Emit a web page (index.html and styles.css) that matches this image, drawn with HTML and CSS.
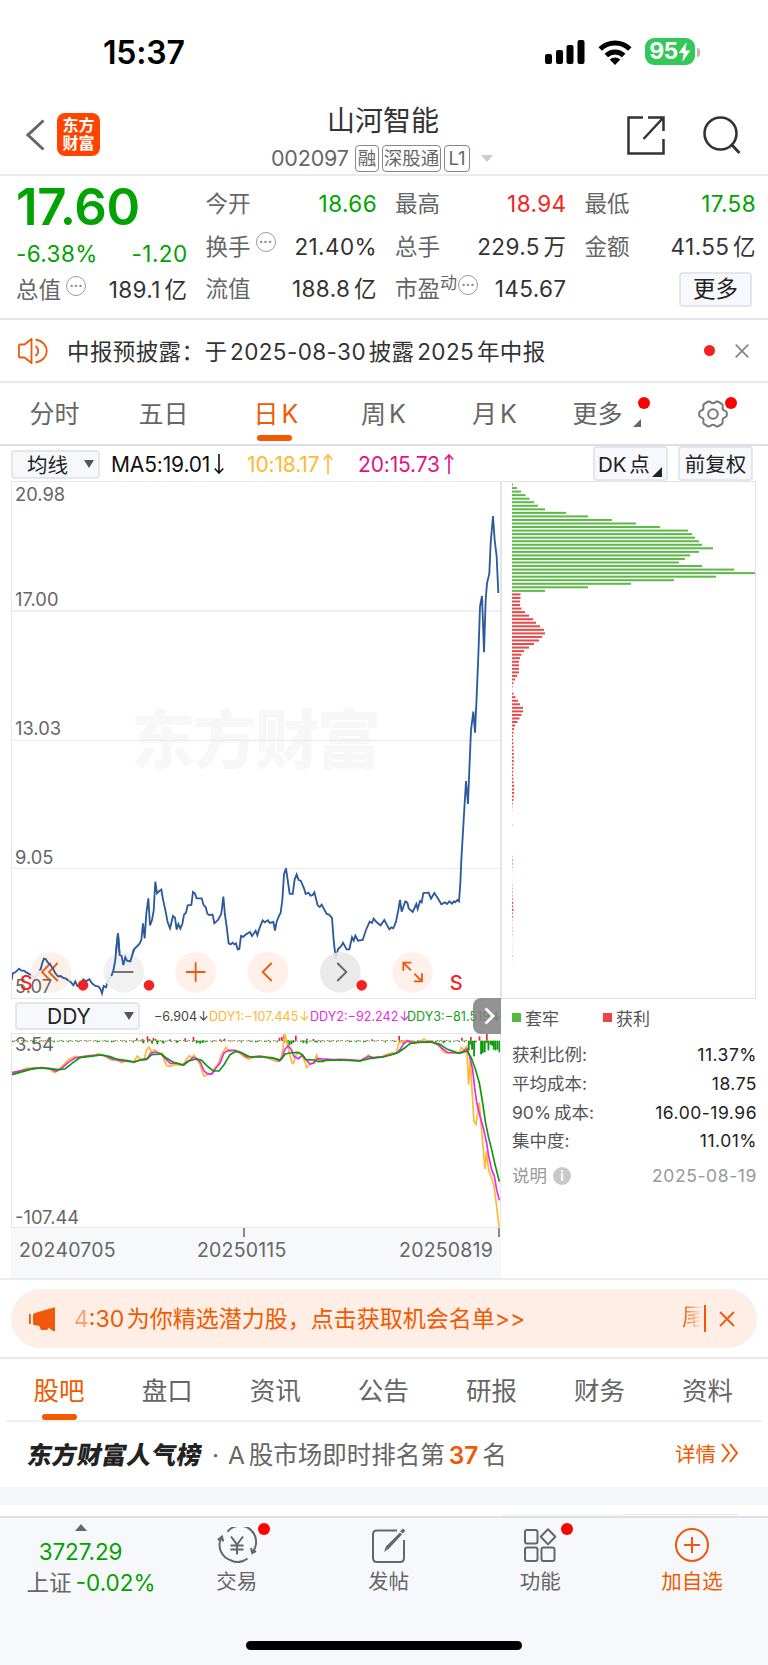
FILE: index.html
```html
<!DOCTYPE html>
<html lang="zh-CN">
<head>
    <meta charset="UTF-8">
    <meta name="viewport" content="width=device-width, initial-scale=1.0">
    <title>山河智能 002097</title>
    <link rel="stylesheet" href="styles.css">
</head>
<body>
    <!-- 状态栏 -->
    <div class="status">
        <span class="time">15:37</span>
        <div class="status-icons">
            <svg width="40" height="24" viewBox="0 0 40 24"><rect x="0" y="14" width="7" height="10" rx="2"/><rect x="11" y="10" width="7" height="14" rx="2"/><rect x="21.500" y="5" width="7" height="19" rx="2"/><rect x="32.500" y="0" width="7" height="24" rx="2"/></svg>
            <svg class="wifi" width="34" height="25" viewBox="0 0 34 25"><path d="M17 25l-5.300-5.500a7.700 7.700 0 0 1 10.600 0z"/><path d="M8.300 15.500a12.500 12.500 0 0 1 17.400 0M2.200 9a21.500 21.500 0 0 1 29.600 0" fill="none" stroke="#000" stroke-width="5"/></svg>
            <div class="battery"><b>95</b><svg width="13" height="20" viewBox="0 0 11 19"><path d="M7.500 0L0 10.500h4.600L3.500 19 11 8H6.400z" fill="#fff"/></svg></div>
            <i class="battery-tip"></i>
        </div>
    </div>

    <!-- 标题 -->
    <header class="nav">
        <svg class="back" width="19" height="32" viewBox="0 0 19 32"><path d="M17.500 1.500L2 16l15.500 14.500" fill="none" stroke="#666" stroke-width="3"/></svg>
        <div class="logo">东方<br>财富</div>
        <div class="title">
            <h1>山河智能</h1>
            <div class="code"><span class="num">002097</span><em>融</em><em class="w3">深股通</em><em class="l1">L1</em><i class="tri"></i></div>
        </div>
        <svg class="share" width="38" height="39" viewBox="0 0 38 39"><path d="M16 1.500H1.500v36h35V23M21 1.500h15.500V15M36 2L16.500 23" fill="none" stroke="#333" stroke-width="2.500"/></svg>
        <svg class="search" width="38" height="38" viewBox="0 0 38 38"><circle cx="17.500" cy="17.500" r="16" fill="none" stroke="#333" stroke-width="2.600"/><path d="M28 28l8.500 9" stroke="#333" stroke-width="2.800"/></svg>
    </header>

    <!-- 报价 -->
    <section class="quote">
        <div class="col first">
            <div class="price">17.60</div>
            <div class="row green"><span>-6.38%</span><span>-1.20</span></div>
            <div class="row last"><label>总值<i class="dots">···</i></label><span>189.1 亿</span></div>
        </div>
        <div class="col">
            <div class="row"><label>今开</label><span class="green">18.66</span></div>
            <div class="row"><label>换手<i class="dots">···</i></label><span>21.40%</span></div>
            <div class="row"><label>流值</label><span>188.8 亿</span></div>
        </div>
        <div class="col">
            <div class="row"><label>最高</label><span class="red">18.94</span></div>
            <div class="row"><label>总手</label><span>229.5 万</span></div>
            <div class="row"><label>市盈<sup>动</sup><i class="dots near">···</i></label><span>145.67</span></div>
        </div>
        <div class="col">
            <div class="row"><label>最低</label><span class="green">17.58</span></div>
            <div class="row"><label>金额</label><span>41.55 亿</span></div>
            <div class="row end"><button class="more">更多</button></div>
        </div>
    </section>

    <section class="notice">
        <svg width="30" height="26" viewBox="0 0 30 26" fill="none" stroke="#f0590c" stroke-width="1.800"><path d="M1 7.500q0-1 1-1h4.500L13.500 1v24L6.500 19.500H2q-1 0-1-1zM17.500 8a6 6 0 0 1 0 10M17.500 1.500c15 2.500 15 20.500 0 23"/></svg>
        <p>中报预披露：于 2025-08-30 披露 2025 年中报</p>
        <i class="dot"></i>
        <svg width="14" height="14" viewBox="0 0 14 14"><path d="M.7.700l12.600 12.600M13.300.7L.7 13.300" stroke="#888" stroke-width="1.800"/></svg>
    </section>

    <nav class="periods">
        <a>分时</a><a>五日</a><a class="on">日 K</a><a>周 K</a><a>月 K</a>
        <a class="has-more">更多<i class="corner"></i><i class="dot"></i></a>
        <a class="gear"><svg width="30" height="28" viewBox="0 0 30 28" fill="none" stroke="#777" stroke-width="2"><path d="M9 2.200c1-1 3-.8 3.700.1 1.300 1.400 3.300 1.400 4.600 0 .7-.9 2.700-1.100 3.700-.1l3 1.900c1 .8.800 2 .6 3-.3 1.800.5 3 2.200 3.500 1.200.4 2 1 2 2.200v2.400c0 1.200-.8 1.800-2 2.200-1.700.5-2.500 1.700-2.200 3.500.2 1 .4 2.200-.6 3l-3 1.900c-1 1-3 .8-3.700-.1-1.300-1.400-3.300-1.400-4.600 0-.7.900-2.700 1.100-3.700.1l-3-1.900c-1-.8-.8-2-.6-3 .3-1.800-.5-3-2.200-3.500-1.200-.4-2-1-2-2.200v-2.400c0-1.200.8-1.800 2-2.200 1.700-.5 2.500-1.700 2.200-3.500-.2-1-.4-2.200.6-3z"/><circle cx="15" cy="14" r="4.800"/></svg><i class="dot"></i></a>
    </nav>

    <!-- 均线 -->
    <div class="ma">
        <button class="sel">均线<i></i></button>
        <span class="ma5">MA5:19.01<svg width="10" height="20" viewBox="0 0 10 20"><path d="M5 0v19M.7 14.500L5 19l4.300-4.500"/></svg></span>
        <span class="ma10">10:18.17<svg width="10" height="20" viewBox="0 0 10 20"><path d="M5 20V1M.7 5.500L5 1l4.300 4.500"/></svg></span>
        <span class="ma20">20:15.73<svg width="10" height="20" viewBox="0 0 10 20"><path d="M5 20V1M.7 5.500L5 1l4.300 4.500"/></svg></span>
        <button class="dk">DK 点<i></i></button>
        <button class="fq">前复权</button>
    </div>

    <section class="charts">
        <div class="left">
            <div class="kline">
                <svg width="490" height="517" viewBox="33 -777 1470 1551">
                    <text class="watermark" x="394" y="70" textLength="750">东方财富</text>
                    <path class="grid" d="M33-387H1503M33 1H1503M33 385H1503"/>
                    <g class="axis"><text x="45" y="-716">20.98</text><text x="45" y="-402">17.00</text><text x="45" y="-16">13.03</text><text x="45" y="372">9.05</text></g>
                    <polyline class="price-line" points="35,720 38,700 46,697 57,686 64,692 72,692 80,698 90,703 98,708 105,718 112,706 118,690 122,688 127,668 132,656 137,657 144,668 152,676 160,688 166,700 174,709 182,708 190,714 198,716 206,722 212,726 220,736 226,724 232,738 242,732 250,718 258,724 268,718 276,730 286,738 296,740 302,748 306,760 311,738 318,742 326,716 334,708 340,692 346,660 349,625 354,580 359,645 365,648 370,675 376,652 381,662 391,664 402,628 412,618 418,612 424,600 429,550 434,595 439,520 445,475 450,556 456,540 461,512 466,425 471,460 478,453 484,449 489,478 497,515 503,547 510,565 519,528 525,533 530,569 535,552 541,566 547,552 552,524 558,518 563,496 574,495 579,456 585,461 590,475 605,475 611,496 617,501 622,521 628,525 638,524 643,550 654,540 664,521 670,470 675,525 680,560 686,610 692,613 698,608 703,613 708,610 713,628 718,627 723,588 730,590 738,583 750,576 756,588 767,572 772,586 778,566 788,541 794,547 804,541 809,549 820,546 825,572 830,545 836,530 842,518 847,480 852,403 858,385 863,420 869,461 878,462 884,418 890,403 896,420 902,422 912,445 917,462 925,458 932,467 938,465 943,457 953,496 959,501 965,494 980,522 987,524 996,534 1001,600 1007,655 1014,628 1024,618 1029,608 1040,628 1048,628 1056,592 1061,602 1066,587 1074,602 1088,600 1098,570 1109,545 1116,549 1121,536 1130,547 1142,556 1153,540 1160,553 1168,568 1174,562 1180,565 1188,545 1195,510 1200,480 1205,515 1216,484 1222,488 1226,505 1238,516 1249,492 1253,507 1260,483 1265,487 1270,459 1286,458 1293,476 1303,459 1313,474 1324,493 1335,487 1341,492 1348,484 1356,491 1362,484 1366,487 1372,480 1377,484 1381,430 1384,360 1391,240 1398,123 1404,192 1408,90 1413,-30 1420,-85 1425,-22 1430,-130 1436,-280 1440,-400 1446,-432 1452,-263 1457,-420 1461,-470 1468,-500 1472,-590 1479,-672 1484,-600 1490,-550 1495,-441"/>
                    <!-- 缩放和平移按钮 -->
                    <g class="ctl">
                        <circle cx="153" cy="697" r="61"/><path d="M152 669l-26 27 26 27M173 669l-26 27 26 27"/>
                        <circle class="gray" cx="371" cy="697" r="61"/><path class="dark" d="M342 696h58"/>
                        <circle cx="587" cy="697" r="61"/><path d="M558 696h58M587 667v58"/>
                        <circle cx="804" cy="697" r="61"/><path d="M815 669l-27 27 27 27"/>
                        <circle class="gray deep" cx="1021" cy="697" r="61"/><path class="dark" d="M1012 669l27 27-27 27"/>
                        <circle cx="1238" cy="697" r="61"/><path d="M1210 692v-24h24M1211 669l22 22M1266 700v24h-24M1265 723l-22-22"/>
                    </g>
                    <polyline class="price-line" points="118,690 122,688 127,668 132,656 137,657 144,668 152,676 160,688 166,700 174,709 182,708 190,714 198,716 206,722"/>
                    <polyline class="price-line" points="334,708 340,692 346,660 349,625 354,580 359,645 365,648 370,675 376,652 381,662 391,664 402,628"/>
                    <g class="axis"><text x="45" y="758">5.07</text></g>
                    <g class="marks"><circle cx="249" cy="736" r="16"/><circle cx="447" cy="736" r="16"/><circle cx="1085" cy="736" r="16"/><text x="59" y="751">S</text><text x="1349" y="751">S</text></g>
                </svg>
            </div>
            <div class="ddy-bar">
                <button class="sel">DDY<i></i></button>
                <span class="d0">−6.904<b>↓</b></span><span class="d1">DDY1:−107.445<b>↓</b></span><span class="d2">DDY2:−92.242<b>↓</b></span><span class="d3">DDY3:−81.519<b>↓</b></span>
                <div class="next"><svg width="11" height="18" viewBox="0 0 11 18"><path d="M1.500 1.500L9 9l-7.500 7.500" fill="none" stroke="#fff" stroke-width="2.800"/></svg></div>
            </div>
            <div class="ddy">
                <svg width="490" height="195" viewBox="33 100 1470 585">
                    <g class="axis"><text x="45" y="154">3.54</text><text x="45" y="672">-107.44</text></g>
                    <g id="ddyBars"></g>
                    <polyline class="l1" points="36,219 60,214 78,206 110,204 135,206 152,209 163,219 175,212 190,196 205,180 225,170 240,172 265,168 285,166 296,162 312,168 325,176 338,182 350,178 364,189 380,182 400,189 412,169 420,178 432,182 440,150 447,142 456,158 464,150 470,158 478,160 486,160 492,180 500,198 514,200 522,195 535,196 550,196 560,178 568,168 576,175 582,166 590,180 598,188 606,215 613,230 622,224 634,222 643,205 652,198 665,165 678,143 686,156 696,154 705,152 714,156 730,170 745,178 760,174 780,168 800,172 815,180 830,186 838,184 845,170 850,135 855,104 862,132 868,160 876,190 880,192 888,165 897,158 906,165 914,185 920,204 930,192 938,190 944,182 950,166 956,182 968,188 980,178 1000,182 1020,178 1050,182 1080,184 1095,174 1106,166 1116,176 1130,172 1145,172 1160,164 1175,160 1190,158 1196,130 1210,126 1218,122 1226,128 1236,124 1244,130 1260,126 1272,118 1282,126 1295,124 1305,132 1318,136 1328,156 1340,160 1362,160 1378,160 1384,143 1392,152 1400,140 1406,255 1411,180 1416,270 1422,365 1428,374 1433,340 1438,308 1443,370 1449,440 1455,508 1459,455 1466,512 1473,530 1482,560 1490,620 1497,682"/>
                    <polyline class="l2" points="36,219 80,210 125,204 150,207 168,215 185,206 205,188 225,175 250,171 290,166 312,167 335,177 355,182 400,187 425,180 442,176 452,160 470,157 485,165 497,178 512,192 530,190 552,196 565,185 580,173 592,177 602,190 612,214 622,222 635,224 648,205 660,190 672,160 685,152 705,152 720,158 740,172 780,170 800,174 820,176 838,184 848,170 855,148 865,138 874,150 882,170 895,177 908,166 918,180 930,193 942,190 952,177 970,178 1000,180 1040,180 1080,183 1106,170 1120,174 1150,171 1190,160 1200,150 1210,134 1222,123 1240,129 1290,126 1310,132 1325,145 1342,158 1380,160 1402,147 1410,175 1418,210 1424,265 1430,308 1440,350 1450,385 1460,430 1466,470 1475,510 1483,530 1490,570 1498,602"/>
                    <polyline class="l3" points="36,225 70,215 100,207 125,205 150,207 175,210 195,208 215,192 240,174 270,170 305,166 330,171 350,178 380,183 405,187 420,181 440,179 455,165 485,163 500,176 520,188 548,196 565,184 590,178 605,182 620,198 640,214 657,214 672,195 690,165 708,155 722,158 750,172 790,172 815,174 842,181 856,163 868,160 894,158 906,165 918,180 942,181 955,186 980,182 1020,181 1080,184 1110,176 1150,172 1192,160 1210,148 1230,132 1250,128 1295,127 1320,134 1342,149 1378,161 1402,154 1414,175 1426,208 1438,250 1448,310 1456,365 1465,410 1475,450 1484,490 1498,546"/>
                </svg>
            </div>
            <div class="dates"><span>20240705</span><span>20250115</span><span>20250819</span></div>
        </div>
        <div class="right">
            <svg class="chips" width="255" height="517" viewBox="501 481 255 517"><g id="chips"></g></svg>
            <div class="legend"><span><i class="g"></i>套牢</span><span><i class="r"></i>获利</span></div>
            <dl>
                <dt>获利比例:</dt><dd>11.37%</dd>
                <dt>平均成本:</dt><dd>18.75</dd>
                <dt>90% 成本:</dt><dd>16.00-19.96</dd>
                <dt>集中度:</dt><dd>11.01%</dd>
            </dl>
            <div class="note"><span>说明<i>i</i></span><span class="date">2025-08-19</span></div>
        </div>
    </section>

    <section class="promo-wrap">
        <div class="promo">
            <svg width="28" height="24" viewBox="0 0 28 24" fill="#f0590c"><path d="M1 7h1.800v10H1zM5 8q0-1.500 2-2L22 1.500q3-1 3 0V24l-3.500-2.500-.5-1-2 2.500h-6l-1.500-4L6 18q-1-.5-1-1.500zM25 .5h2V24h-2z"/></svg>
            <p><span class="fade-in">4</span>:30 为你精选潜力股，点击获取机会名单&gt;&gt;</p>
            <span class="fade-out">尾</span>
            <svg class="close" width="16" height="16" viewBox="0 0 16 16"><path d="M1 1l14 14M15 1L1 15" stroke="#f0590c" stroke-width="1.800"/></svg>
        </div>
    </section>

    <nav class="tabs">
        <a class="on">股吧</a><a>盘口</a><a>资讯</a><a>公告</a><a>研报</a><a>财务</a><a>资料</a>
    </nav>

    <section class="rank">
        <strong>东方财富人气榜</strong>
        <p>· <span>A 股市场即时排名第</span> <b>37</b> 名</p>
        <a>详情<svg width="18" height="20" viewBox="0 0 18 20"><path d="M1 1l7 9-7 9M9 1l7 9-7 9" fill="none" stroke="#f0590c" stroke-width="2"/></svg></a>
    </section>
    <div class="gap"></div>
    <div class="peek"><i></i><i class="box"></i></div>

    <!-- 底部栏 -->
    <footer>
        <div class="index">
            <i class="up"></i>
            <span class="green">3727.29</span>
            <span>上证 <b>-0.02%</b></span>
        </div>
        <a class="act">
            <svg width="40" height="36" viewBox="0 0 40 36" fill="none" stroke="#666" stroke-width="2"><path d="M15 33.700A16 16 0 0 1 4.500 10.500M10.500 4.700A16 16 0 0 1 35.500 25M30.500 31.500A16 16 0 0 1 14 33.500M.8 13l4.200-3.500 1.200 5M34 21l1.200 5 3.800-2"/><path d="M14 9.500l6 8 6-8M20 17.500v10M13.500 18.500h13M13.500 22.500h13"/></svg>
            交易<i class="dot"></i>
        </a>
        <a class="act">
            <svg width="36" height="36" viewBox="0 0 36 36" fill="none" stroke="#666" stroke-width="2"><path d="M26 3.500H6q-4 0-4 4V31q0 4 4 4h23q4 0 4-4V13"/><path d="M13 25l2-5.500L29 5.500l2 2L18 21.500z" fill="#666" stroke="none"/><path d="M30.500 5.500l2.500-3" stroke-width="3.500"/></svg>
            发帖
        </a>
        <a class="act">
            <svg width="34" height="36" viewBox="0 0 34 36" fill="none" stroke="#666" stroke-width="2"><rect x="2" y="3" width="12.500" height="13.500" rx="2"/><rect x="2" y="20.500" width="12.500" height="13.500" rx="2"/><rect x="18.500" y="20.500" width="13" height="13.500" rx="2"/><path d="M25 2.200l7.300 7.600L25 17.400l-7.300-7.600z" stroke-linejoin="round"/></svg>
            功能<i class="dot"></i>
        </a>
        <a class="act add">
            <svg width="36" height="36" viewBox="0 0 36 36" fill="none" stroke="#f0590c" stroke-width="2"><circle cx="18" cy="18" r="16"/><path d="M10 18h16M18 10v16"/></svg>
            加自选
        </a>
        <div class="home"></div>
    </footer>

    <script src="script.js"></script>
</body>
</html>
```

FILE: styles.css
```css
* {
    box-sizing: border-box;
}
body {
    margin: 0;
    width: 768px;
    height: 1665px;
    overflow: hidden;
    background: #fff;
    color: #333;
    font-family: Inter, "Noto Sans CJK SC", sans-serif;
    font-size: 22px;
}
i, em {
    font-style: normal;
}
svg {
    display: block;
    flex: none;
}
button {
    font: inherit;
    color: #222;
    padding: 0;
    flex: none;
    background: #f7f8fb;
    border: 2px solid #e4e6ec;
    border-radius: 4px;
    display: flex;
    align-items: center;
    justify-content: center;
}
.green { color: #00a300; }
.red { color: #f52222; }
.dot {
    width: 12px;
    height: 12px;
    border-radius: 50%;
    background: #f00;
}

/* 状态栏 */
.status {
    height: 104px;
    display: flex;
    justify-content: space-between;
    padding: 36px 68px 0 103px;
    color: #000;
}
.time {
    font-size: 32px;
    line-height: 33px;
    font-weight: 600;
    letter-spacing: -0.2px;
}
.status-icons {
    display: flex;
    align-items: flex-start;
    padding-top: 4px;
}
.wifi {
    margin: 0 13px 0 13px;
}
.battery {
    width: 50px;
    height: 27px;
    margin-top: -2px;
    border-radius: 9px;
    background: #34c759;
    display: flex;
    align-items: center;
    justify-content: center;
    color: #fff;
    font-size: 23px;
    line-height: 27px;
    letter-spacing: -0.5px;
}
.battery b {
    font-weight: 700;
}
.battery-tip {
    width: 3px;
    height: 9px;
    margin: 8px 0 0 2px;
    background: #bbb;
    border-radius: 0 4px 4px 0;
}

.nav {
    height: 72px;
    display: flex;
    align-items: flex-start;
    padding-left: 26px;
    border-bottom: 2px solid #ebebed;
}
.back { margin-top: 15px; }
.logo {
    width: 43px;
    height: 43px;
    margin: 9px 0 0 12px;
    padding-top: 4px;
    border-radius: 8px;
    background: #ff4400;
    color: #fff;
    font-size: 16px;
    line-height: 17.500px;
    font-weight: 600;
    text-align: center;
}
.title {
    width: 340px;
    margin-left: 113px;
    text-align: center;
}
h1 {
    margin: 1px 0 0;
    font-size: 28px;
    line-height: 33px;
    font-weight: 400;
}
.code {
    display: flex;
    align-items: center;
    height: 28px;
    margin: 6px 0 0 58px;
    color: #666;
    font-size: 21.500px;
}
.code .num {
    width: 84px;
    text-align: left;
    letter-spacing: -0.2px;
}
.code em {
    width: 24px;
    height: 27px;
    margin-right: 3px;
    border: 1.500px solid #888;
    border-radius: 4px;
    font-size: 18.500px;
    line-height: 24px;
    white-space: nowrap;
    display: flex;
    justify-content: center;
}
.code em.w3 { width: 59px; }
.code em.l1 { width: 26px; }
.tri {
    margin-left: 8px;
    border: 6px solid transparent;
    border-top: 7px solid #ccc;
    border-bottom: 0;
}
.share { margin: 12px 0 0 74px; }
.search { margin: 12px 0 0 38px; }

/* 报价 */
.quote {
    height: 144px;
    display: grid;
    grid-template-columns: repeat(4, 171.500px);
    column-gap: 18px;
    padding: 7px 0 0 16px;
    border-bottom: 2px solid #e4e6eb;
}
.row {
    height: 42.500px;
    display: flex;
    justify-content: space-between;
    align-items: center;
    font-size: 22.500px;
    letter-spacing: 0.4px;
    white-space: nowrap;
    line-height: 42px;
}
.row span {
    word-spacing: -3px;
}
.row.end { justify-content: flex-end; }
.price {
    height: 48px;
    line-height: 48px;
    font-size: 51px;
    font-weight: 600;
    letter-spacing: -0.400px;
    color: #00a300;
}
.first .row { height: 45px; }
.first .row.last { height: 28px; }
.row label {
    display: flex;
    align-items: center;
    color: #666;
    letter-spacing: 0;
}
.dots {
    width: 20px;
    height: 20px;
    margin: -9px 0 0 5px;
    border: 1.500px solid #999;
    border-radius: 50%;
    font-size: 13px;
    line-height: 17px;
    letter-spacing: 0;
    display: flex;
    justify-content: center;
    font-weight: 700;
    color: #888;
}
.dots.near { margin-left: 1px; }
.row sup {
    font-size: 17px;
    line-height: 17px;
    margin-top: -12px;
}
.more {
    width: 73px;
    height: 35px;
    margin-right: 4px;
    font-size: 22.500px;
    letter-spacing: 0;
}

.notice {
    height: 63px;
    display: flex;
    align-items: center;
    padding: 0 19px 0 18px;
    border-bottom: 2px solid #ebebed;
}
.notice p {
    flex: 1;
    margin: 0 0 2px 19px;
    font-size: 22.500px;
    word-spacing: -4px;
    letter-spacing: 0.4px;
    white-space: nowrap;
}
.notice .dot {
    margin-right: 20px;
    width: 11px;
    height: 11px;
    background: #f52222;
}

.periods {
    height: 63px;
    display: grid;
    grid-template-columns: 109px 109px 116px 99px 123px 83px 1fr;
    border-bottom: 2px solid #dcdee8;
    font-size: 25px;
    line-height: 62px;
    text-align: center;
    color: #666;
    word-spacing: -4px;
}
.periods a { position: relative; }
.on { color: #f05a00; }
.periods .on::after, .tabs .on::after {
    content: "";
    position: absolute;
    left: 50%;
    margin-left: -19px;
    bottom: 4px;
    width: 35px;
    height: 6px;
    border-radius: 3px;
    background: #f05a00;
}
.corner {
    position: absolute;
    left: 77px;
    top: 36px;
    border-left: 8px solid transparent;
    border-bottom: 8px solid #666;
}
.periods .dot {
    position: absolute;
    left: 82px;
    top: 14px;
}
.gear svg { margin: 17px 0 0 59px; }
.periods .gear .dot { left: 86px; }

/* 均线 */
.ma {
    height: 35px;
    display: flex;
    align-items: center;
    padding-left: 11px;
    font-size: 21px;
}
.sel i {
    border: 5px solid transparent;
    border-top: 8px solid #555;
    border-bottom: 0;
}
.ma .sel {
    width: 89px;
    height: 29px;
    margin-top: 1px;
    font-size: 20.500px;
    justify-content: space-between;
    padding: 0 4px 0 14px;
}
.ma span {
    display: flex;
    align-items: center;
    padding-top: 1px;
    letter-spacing: -0.15px;
    white-space: nowrap;
}
.ma span svg {
    margin-left: 4px;
    fill: none;
    stroke: currentColor;
    stroke-width: 1.600;
}
.ma5 { width: 136px; margin-left: 11px; color: #111; }
.ma10 { width: 111px; color: #ffb830; }
.ma20 { width: 235px; color: #e0128c; }
.dk, .fq {
    width: 75px;
    height: 35px;
    font-size: 20.500px;
    padding-bottom: 2px;
    white-space: nowrap;
    word-spacing: -3px;
}
.dk { position: relative; justify-content: flex-start; padding-left: 3px; }
.dk i {
    position: absolute;
    right: 4px;
    bottom: 2px;
    border-left: 10px solid transparent;
    border-bottom: 10px solid #222;
}
.fq { margin-left: 10px; }

.charts {
    display: grid;
    grid-template-columns: 490px 256px;
    margin-left: 11px;
    height: 799px;
}
.charts::after {
    content: "";
    height: 2px;
    width: 768px;
    margin-left: -11px;
    background: #ebebf0;
}
.left, .right {
    height: 797px;
}
.kline {
    height: 518px;
    outline: 1px solid #e4e6ea;
    outline-offset: -1px;
}
.grid {
    stroke: #e8ebf2;
    stroke-width: 4;
}
.axis text {
    font-size: 55px;
    fill: #666;
}
.watermark {
    font-size: 192px;
    font-weight: 900;
    fill: #f7f7f7;
}
.price-line {
    fill: none;
    stroke: #2c5a9c;
    stroke-width: 5.500;
}
.ctl circle { fill: #fff0e8; fill-opacity: .9; }
.ctl .gray { fill: #f0f0f0; }
.ctl .deep { fill: #e8e8e8; }
.ctl path { fill: none; stroke: #f0590c; stroke-width: 5.500; }
.ctl .dark { stroke: #666; }
.marks { fill: #f52222; }
.marks text { font-size: 60px; font-weight: 500; }

.ddy-bar {
    position: relative;
    height: 34px;
    display: flex;
    align-items: center;
    padding-left: 4px;
    font-size: 12.600px;
    white-space: nowrap;
}
.ddy-bar .sel {
    width: 125px;
    height: 28px;
    margin-right: 14px;
    padding: 0 4px 0 30px;
    font-size: 21px;
    justify-content: space-between;
}
.ddy-bar span { flex: none; }
.ddy-bar b { font-weight: 400; margin-left: 1px; }
.d0 { width: 55px; color: #444; }
.d1 { width: 101px; color: #ffb830; }
.d2 { width: 97px; color: #e52be5; }
.d3 { color: #11a011; }
.next {
    position: absolute;
    right: 0;
    top: -1px;
    width: 28px;
    height: 36px;
    padding: 9px 0 0 11px;
    border-radius: 8px 0 0 8px;
    background: rgba(128, 128, 128, .85);
}
.ddy {
    height: 195px;
    outline: 1px solid #e4e6ea;
    outline-offset: -1px;
}
.ddy polyline { fill: none; stroke-width: 5; }
.l1 { stroke: #ffb830; }
.l2 { stroke: #e52be5; }
.l3 { stroke: #0a9a0a; }
.dates {
    height: 50px;
    padding: 0 8px 6px 8px;
    background: linear-gradient(#888, #888) 232px 0 / 2px 9px no-repeat, linear-gradient(#888, #888) 487px 0 / 2px 9px no-repeat, #f7f8fa;
    display: grid;
    grid-template-columns: 178px 1fr auto;
    align-items: center;
    font-size: 19.500px;
    letter-spacing: 0.2px;
    color: #666;
}

.chips {
    outline: 1px solid #e0e3ea;
    outline-offset: -1px;
    height: 518px;
}
.legend {
    height: 37px;
    display: flex;
    align-items: center;
    padding-left: 11px;
    font-size: 17px;
    color: #555;
}
.legend span {
    width: 91px;
    display: flex;
    align-items: center;
}
.legend i {
    width: 9px;
    height: 9px;
    margin-right: 4px;
}
.legend .g { background: #55b83f; }
.legend .r { background: #eb4545; }
dl {
    margin: 5px 0 0 11px;
    display: grid;
    grid-template-columns: 1fr 1fr;
    grid-auto-rows: 28.700px;
    align-items: center;
    white-space: nowrap;
    font-size: 17.500px;
    line-height: 28px;
}
dt { color: #555; word-spacing: -2px; }
dd { margin: 0; justify-self: end; color: #222; letter-spacing: 0.5px; }
.note {
    display: flex;
    justify-content: space-between;
    margin: 6px 0 0 11px;
    line-height: 28px;
    font-size: 17.500px;
    color: #999;
}
.note span { display: flex; align-items: center; }
.note .date { letter-spacing: 0.6px; }
.note i {
    width: 18px;
    height: 18px;
    margin-left: 6px;
    border-radius: 50%;
    background: #c8c8c8;
    color: #fff;
    font-size: 13px;
    line-height: 18px;
    font-weight: 700;
    text-align: center;
}

/* 推广条 */
.promo-wrap {
    height: 79px;
    padding: 9px 11px 0;
    border-bottom: 2px solid #ebebed;
}
.promo {
    height: 59px;
    padding: 0 22px 0 17px;
    border-radius: 30px;
    background: #ffeee6;
    display: flex;
    align-items: center;
    color: #f05a00;
    font-size: 23px;
    white-space: nowrap;
}
.promo p {
    flex: 1;
    margin: 0 0 3px 18px;
    word-spacing: -4px;
}
.fade-in { opacity: .5; }
.fade-out {
    width: 24px;
    height: 27px;
    line-height: 25px;
    overflow: hidden;
    border-right: 2px solid #f05a00;
    background: linear-gradient(to right, #f05a00, #ffeee6 90%);
    background-clip: text;
    -webkit-text-fill-color: transparent;
}
.close { margin-left: 13px; }

.tabs {
    height: 63px;
    display: grid;
    grid-template-columns: repeat(7, 108.100px);
    margin: 0 6px;
    border-bottom: 2px solid #eff0f2;
    font-size: 25.500px;
    line-height: 63px;
    text-align: center;
    color: #666;
}
.tabs a { position: relative; left: -1px; }
.tabs a.on { color: #f05a00; }
.tabs .on::after { bottom: 2px; margin-left: -17px; }

.rank {
    height: 65px;
    display: flex;
    align-items: center;
    padding: 0 29px 3px 28px;
    font-size: 24.500px;
    color: #666;
    white-space: nowrap;
}
.rank strong {
    width: 180px;
    font-weight: 900;
    color: #222;
    transform: skewX(-10deg);
    letter-spacing: 0.4px;
}
.rank p {
    flex: 1;
    margin: 0 0 0 4px;
    word-spacing: -3px;
}
.rank p span { margin-left: 5px; }
.rank b { color: #f05a00; font-weight: 600; }
.rank a {
    display: flex;
    align-items: center;
    gap: 5px;
    color: #f05a00;
    font-size: 20.500px;
}
.gap { height: 18px; background: #f5f6f9; }
.peek {
    height: 11px;
    display: flex;
    align-items: flex-end;
    padding-left: 502px;
}
.peek i { width: 120px; height: 2px; background: #f5f6f9; }
.peek .box { width: 116px; border: 1px solid #e8e8ec; border-bottom: 0; border-radius: 3px 3px 0 0; background: #fff; }

/* 底部栏 */
footer {
    position: relative;
    height: 149px;
    display: flex;
    background: #f7f8fb;
    border-top: 2px solid #dfe1e6;
}
.index {
    width: 161px;
    display: flex;
    flex-direction: column;
    align-items: center;
    padding: 6px 0 0 21px;
    line-height: 31px;
    font-size: 22.500px;
    color: #666;
    white-space: nowrap;
}
.index b { color: #00a300; font-weight: 400; margin-left: -2px; }
.index .green { margin-left: -21px; letter-spacing: -0.1px; }
.index .up {
    margin-left: -21px;
    border: 6px solid transparent;
    border-top: 0;
    border-bottom: 7px solid #666;
    margin-bottom: 5px;
}
.act {
    position: relative;
    width: 151.700px;
    display: flex;
    flex-direction: column;
    align-items: center;
    padding-top: 9px;
    font-size: 20.500px;
    line-height: 38px;
    color: #666;
}
.act.add { color: #f05a00; }
.act .dot { position: absolute; left: 97px; top: 5px; }
.home {
    position: absolute;
    left: 246px;
    bottom: 15px;
    width: 276px;
    height: 9px;
    border-radius: 5px;
    background: #000;
}
```

FILE: script.js
```js
const NS = "http://www.w3.org/2000/svg";

function rect(parent, x, y, w, h, fill) {
    const r = document.createElementNS(NS, "rect");
    r.setAttribute("x", x);
    r.setAttribute("y", y);
    r.setAttribute("width", w);
    r.setAttribute("height", h);
    r.setAttribute("fill", fill);
    parent.appendChild(r);
}

// 筹码分布
const trapped = [1, 5, 9, 13.5, 17.5, 22, 26, 33, 54, 76, 100, 124, 148, 176, 180, 183, 187, 190, 201, 187, 178, 173, 167, 190, 222, 244, 204, 162, 119, 76, 33];
const profit = [8.5, 8.5, 8, 8, 9.5, 13, 17, 21, 24, 28, 32, 33, 30, 27, 22, 17, 12, 9.5, 8, 7, 7, 7, 7, 5, 3, 1.3, 0.6, 0.2, 1.5, 3.5, 6, 8, 11, 11, 9.5, 7.5, 5.5, 3, 2, 1.5, 1, 1, 1.5, 1.5, 1.5, 1.8, 1.8, 1.8, 1.5, 1.5, 1.2, 1, 1.3, 1.8, 2.2, 2.2, 2.2, 1.8, 1.4, 0.8, 0.3, 0.2, 0, 0, 0, 0.3, 0, 0, 0, 0, 0, 0, 0, 0, 0.3, 0.7, 0.6, 0.4, 0.1, 0.1, 0, 0.1, 0.3, 0.5, 0.5, 0.5, 0.7, 1.3, 1, 1.5, 0.8, 0.8, 0.3, 0.2, 0.4, 0.4, 0.3, 0.1, 0.1, 0.2, 0.2, 0.2, 0.3, 0.1, 0.1];
const chips = document.getElementById("chips");
trapped.concat(profit).forEach((w, i) => {
    if (w > 0) rect(chips, 512, 483 + i * 3.545, w, 2, i < trapped.length ? "#5cb947" : "#e84a4a");
});

// DDY 柱
const bars = document.getElementById("ddyBars");
const base = 123;
for (let x = 36; x < 1400; x += 5.4) {
    const n = Math.floor(x / 5.4);
    const up = (n * 7) % 11 < 4;
    if (n % 5 !== 0) rect(bars, x, up ? base - 2 : base, 4.5, up ? 2.5 : 2 + (n * 3) % 4, up ? "#f52222" : "#0a9a0a");
}
[[410, 116], [427, 118], [442, 110], [448, 118], [460, 115], [466, 118], [510, 119], [555, 116], [580, 112], [660, 119], [673, 117], [838, 114], [845, 112], [852, 105], [887, 108], [920, 117], [940, 118], [1115, 119], [1197, 109], [1385, 114], [1412, 112], [1438, 110], [1460, 103]].forEach(b => {
    rect(bars, b[0] - 2, b[1], 5, base - b[1], "#f52222");
});
[[430, 131], [456, 132], [472, 134], [490, 132], [530, 129], [590, 131], [600, 132], [608, 130], [862, 134], [868, 136], [874, 134], [880, 129], [910, 130], [920, 132], [950, 129], [1210, 132], [1228, 131], [1260, 129], [1330, 130], [1406, 152], [1411, 135], [1416, 150], [1422, 170], [1427, 128], [1443, 164], [1448, 160], [1454, 158], [1460, 130], [1465, 152], [1471, 135], [1476, 138], [1481, 150], [1486, 152], [1492, 150], [1498, 158]].forEach(b => {
    rect(bars, b[0] - 2.5, base, 5.5, b[1] - base, "#0a9a0a");
});
```
